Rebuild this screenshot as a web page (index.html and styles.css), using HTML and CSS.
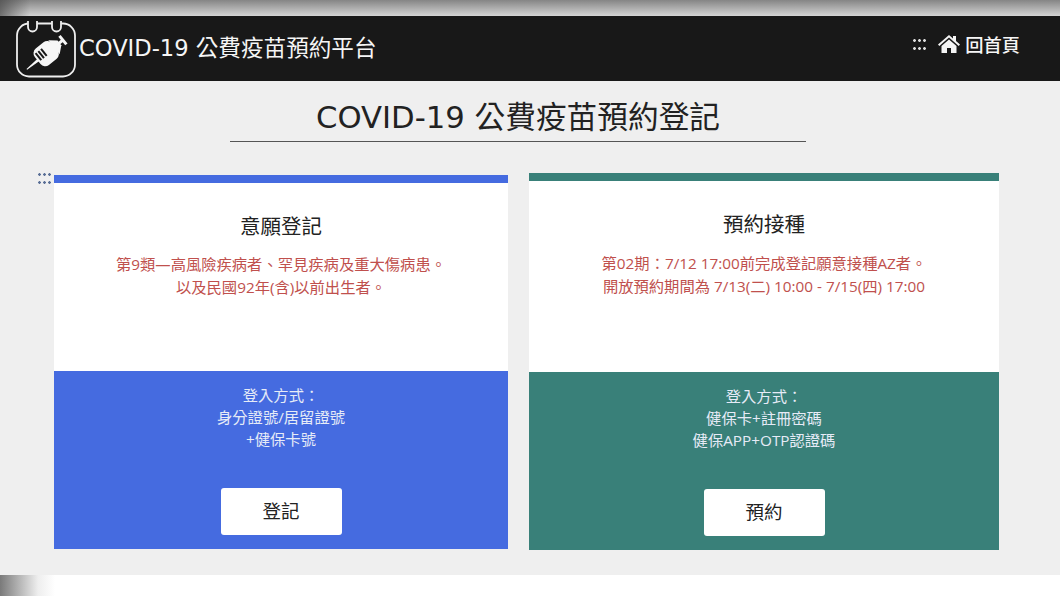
FILE: index.html
```html
<!DOCTYPE html>
<html lang="zh-Hant">
<head>
    <meta charset="UTF-8">
    <meta name="viewport" content="width=device-width, initial-scale=1.0">
    <title>COVID-19 公費疫苗預約平台</title>
    <link rel="stylesheet" href="styles.css">
</head>
<body>
    <div class="top-strip"></div>
    <header class="site-header">
        <div class="brand">
            <svg class="brand-logo" viewBox="0 0 62 60" width="62" height="60" aria-hidden="true">
                <rect x="3" y="4.500" width="58" height="53" rx="12" fill="none" stroke="#eee" stroke-width="1.800"/>
                <path d="M14 2v6a4.500 4.500 0 0 0 9 0V2M38 2v6a4.500 4.500 0 0 0 9 0V2" fill="#181818" stroke="#eee" stroke-width="1.800"/>
                <g transform="translate(33 34) rotate(51)" fill="#f6f6f6">
                    <rect x="-1.500" y="-21" width="3" height="7"/>
                    <rect x="-5.500" y="-22" width="11" height="3"/>
                    <path d="M-9-9 L-3-16 H3 L9-9z"/>
                    <rect x="-10.500" y="-10" width="21" height="22" rx="6"/>
                    <path d="M-1.500 11h3l-1 15h-1z"/>
                    <rect x="-7" y="1" width="9" height="2" fill="#181818"/>
                    <rect x="-7" y="4.500" width="9" height="2" fill="#181818"/>
                    <rect x="-7" y="8" width="9" height="2" fill="#181818"/>
                </g>
            </svg>
            <span class="brand-name">COVID-19 公費疫苗預約平台</span>
        </div>
        <nav class="top-nav">
            <span class="grip grip-light"></span>
            <a class="home-link" href="#">
                <svg viewBox="0 0 22 18" width="22" height="18" aria-hidden="true">
                    <path d="M11 0L0 9.500l1.300 1.500L11 2.600 20.700 11l1.300-1.500-4-3.400V1h-3v2.500z" fill="#f5f5f5"/>
                    <path d="M11 4.500L3.500 11v7H9v-5h4v5h5.500v-7z" fill="#f5f5f5"/>
                </svg>
                回首頁
            </a>
        </nav>
    </header>

    <main class="content">
        <h1 class="page-title">COVID-19 公費疫苗預約登記</h1>
        <div class="cards">
            <section class="card card-blue">
                <span class="grip grip-dark"></span>
                <div class="card-top">
                    <h2>意願登記</h2>
                    <p>第9類—高風險疾病者、罕見疾病及重大傷病患。<br>以及民國92年(含)以前出生者。</p>
                </div>
                <div class="card-bottom">
                    <p>登入方式：<br>身分證號/居留證號<br>+健保卡號</p>
                    <button class="card-btn">登記</button>
                </div>
            </section>
            <section class="card card-green">
                <div class="card-top">
                    <h2>預約接種</h2>
                    <p>第02期：7/12 17:00前完成登記願意接種AZ者。<br>開放預約期間為 7/13(二) 10:00 - 7/15(四) 17:00</p>
                </div>
                <div class="card-bottom">
                    <p>登入方式：<br>健保卡+註冊密碼<br>健保APP+OTP認證碼</p>
                    <button class="card-btn">預約</button>
                </div>
            </section>
        </div>
    </main>
    <div class="bottom-strip"></div>
</body>
</html>
```

FILE: styles.css
```css
* {
    box-sizing: border-box;
}

body {
    margin: 0;
    height: 596px;
    overflow: hidden;
    background-color: #fff;
    color: #222;
    font-family: "DejaVu Sans", "Noto Sans CJK TC", sans-serif;
}

.top-strip {
    height: 16px;
    background:
        linear-gradient(to right, rgba(70, 70, 70, 0.7), rgba(70, 70, 70, 0) 30px),
        linear-gradient(to bottom, #858585, #d4d4d4);
}

.bottom-strip {
    height: 21px;
    background: linear-gradient(to right, #7a7a7a, #eee 38px, #fff 55px);
}

.site-header {
    height: 65px;
    display: flex;
    justify-content: space-between;
    align-items: center;
    padding: 0 40px 0 14px;
    background-color: #181818;
    color: #f5f5f5;
}

.brand {
    display: flex;
    align-items: center;
    gap: 3px;
}

.brand-name {
    margin-bottom: 5px;
    font-size: 22.600px;
}

.top-nav {
    display: flex;
    align-items: center;
    gap: 11px;
    margin-top: -9px;
}

.home-link {
    display: flex;
    align-items: center;
    gap: 5px;
    color: #f5f5f5;
    font-size: 18.300px;
    font-weight: 500;
    text-decoration: none;
}

.grip {
    display: block;
    width: 14px;
    height: 11px;
    background-image: radial-gradient(circle at 1.500px 1.500px, #ddd 1.300px, transparent 1.500px);
    background-size: 5px 8px;
}

.grip-dark {
    position: absolute;
    left: -16px;
    top: -2px;
    background-image: radial-gradient(circle at 1.500px 1.500px, #5a6f96 1.200px, transparent 1.500px);
}

.content {
    height: 494px;
    padding-top: 15px;
    background-color: #efefef;
}

.page-title {
    width: 576px;
    height: 46px;
    margin: 0 0 0 230px;
    border-bottom: 1px solid #555;
    font-size: 30.700px;
    font-weight: 400;
    line-height: 44px;
    text-align: center;
    color: #222;
}

.cards {
    display: flex;
    align-items: flex-start;
    gap: 21px;
    margin: 33px 0 0 54px;
}

.card {
    position: relative;
    display: flex;
    flex-direction: column;
    height: 374px;
    width: 454px;
    text-align: center;
}

.card-green {
    height: 377px;
    width: 470px;
    margin-top: -2px;
}

.card-blue {
    --accent: #456be0;
}

.card-green {
    --accent: #398079;
}

.card-top {
    height: 196px;
    padding-top: 30px;
    border-top: 8px solid var(--accent);
    background-color: #fff;
}

.card-green .card-top {
    height: 199px;
}

.card-top h2 {
    margin: 0 0 12px;
    font-size: 20.500px;
    font-weight: 400;
    line-height: 28px;
    color: #222;
}

.card-green .card-top h2 {
    margin-bottom: 13px;
}

.card-top p {
    margin: 0;
    font-family: "Open Sans", "Noto Sans CJK TC", sans-serif;
    font-size: 15.300px;
    line-height: 23px;
    color: #c0504d;
}

.card-bottom {
    flex: 1;
    display: flex;
    flex-direction: column;
    align-items: center;
    padding-top: 13px;
    background-color: var(--accent);
    color: #e6ebf7;
}

.card-bottom p {
    margin: 0;
    font-family: "Open Sans", "Noto Sans CJK TC", sans-serif;
    font-size: 15.300px;
    line-height: 22px;
}

.card-btn {
    width: 121px;
    height: 47px;
    margin-top: 38px;
    padding-bottom: 4px;
    border: none;
    border-radius: 3px;
    background-color: #fff;
    color: #222;
    font-family: inherit;
    font-size: 18.500px;
}
```
